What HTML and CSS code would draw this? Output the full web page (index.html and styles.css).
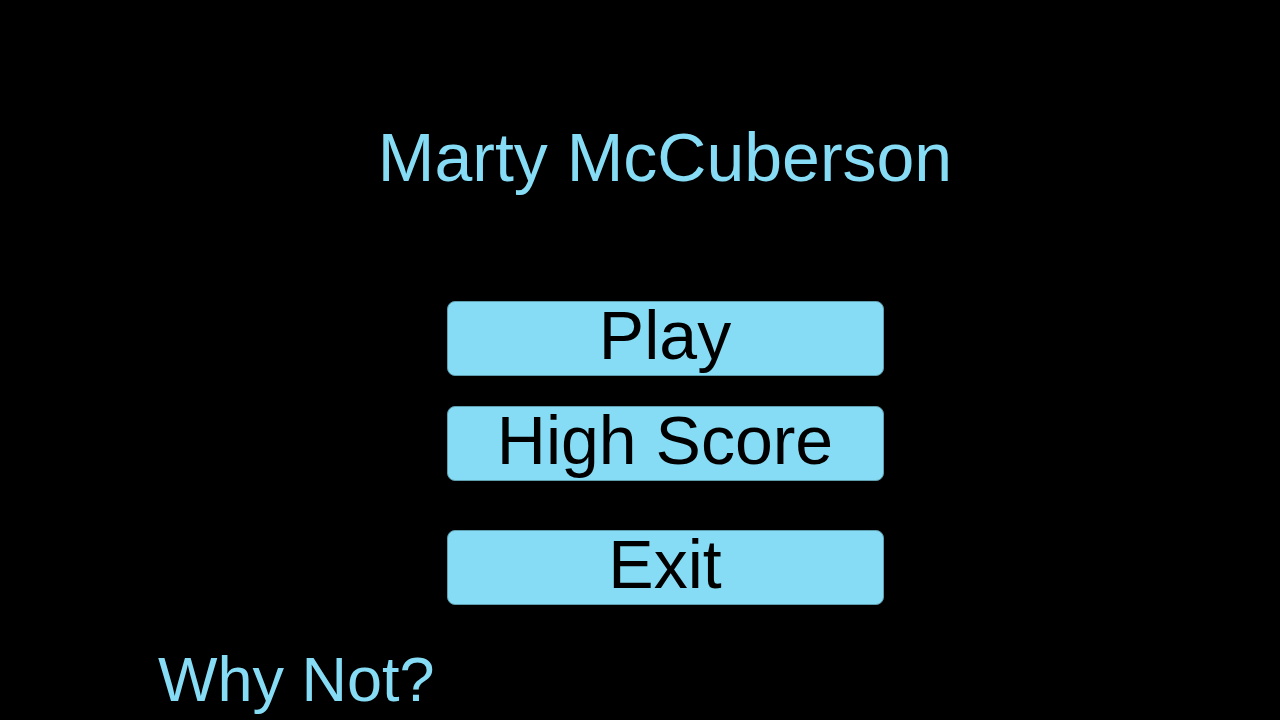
FILE: index.html
```html
<!DOCTYPE html>
<html lang="en">
<head>
<meta charset="utf-8">
<title>Marty McCuberson</title>
<link rel="stylesheet" href="styles.css">
</head>
<body>
<main class="screen">
  <h1 class="title">Marty McCuberson</h1>
  <nav class="menu">
    <button class="menu-btn btn-play">Play</button>
    <button class="menu-btn btn-score">High Score</button>
    <button class="menu-btn btn-exit">Exit</button>
  </nav>
  <p class="tagline">Why Not?</p>
</main>
</body>
</html>
```
FILE: styles.css
```css
html, body {
  margin: 0;
  padding: 0;
  background: #000;
  width: 1280px;
  height: 720px;
  overflow: hidden;
}

.screen {
  display: flex;
  flex-direction: column;
  padding-top: 123px;
  font-family: "Liberation Sans", Arial, sans-serif;
}

.title {
  margin: 0;
  padding-left: 50px;
  text-align: center;
  font-size: 68px;
  line-height: 68px;
  font-weight: normal;
  color: #86dcf4;
}

.menu {
  display: flex;
  flex-direction: column;
  align-items: center;
  padding-left: 50px;
  margin-top: 110px;
}

.menu-btn {
  box-sizing: border-box;
  width: 437px;
  height: 75px;
  padding: 0 0 9px;
  border: 1px solid #5f9fb0;
  border-radius: 8px;
  background: #86dcf4;
  color: #000;
  font-family: "Liberation Sans", Arial, sans-serif;
  font-size: 68px;
  line-height: 66px;
  text-align: center;
}

.btn-score {
  margin-top: 30px;
  padding-bottom: 11px;
}

.btn-exit {
  margin-top: 49px;
  padding-bottom: 8px;
}

.tagline {
  margin: 43px 0 0;
  padding-left: 158px;
  font-size: 63px;
  line-height: 63px;
  color: #86dcf4;
}
```
